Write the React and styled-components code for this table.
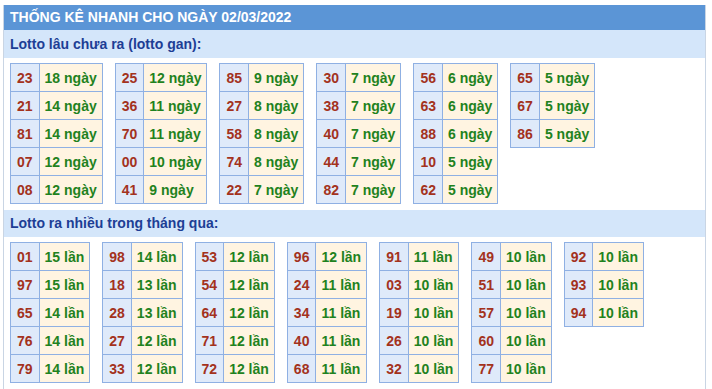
import React from "react";
import styled, { createGlobalStyle } from "styled-components";

const GlobalStyle = createGlobalStyle`
  body {
    margin: 0;
    background: #fff;
    font-family: "Liberation Sans", Arial, sans-serif;
  }
`;

const Box = styled.div`
  margin: 5px 6px 0 3px;
  border-left: 1px solid #c9d5e4;
  border-right: 1px solid #c9d5e4;
  padding-bottom: 3px;
`;

const Header = styled.div`
  height: 25px;
  line-height: 25px;
  padding-left: 6px;
  background: #5b95d6;
  color: #fff;
  font-size: 14px;
  font-weight: bold;
`;

const SubHeader = styled.div`
  height: ${(props) => props.h}px;
  line-height: ${(props) => props.h}px;
  padding-left: 6px;
  background: #d4e6fa;
  color: #1d3e95;
  font-size: 14px;
  font-weight: bold;
`;

const Tables = styled.div`
  display: flex;
  flex-wrap: wrap;
  align-items: flex-start;
  column-gap: 12px;
  padding: 5px 6px 6px 6px;
`;

const Table = styled.table`
  border-collapse: collapse;
  font-size: 14px;
  font-weight: bold;
`;

const Num = styled.td`
  height: 27px;
  padding: 0 6px;
  border: 1px solid #8fb0e3;
  background: #dfeafa;
  color: #a3321d;
  text-align: center;
`;

const Val = styled.td`
  height: 27px;
  padding: 0 5px;
  border: 1px solid #8fb0e3;
  background: #fff4e1;
  color: #1f8220;
  white-space: nowrap;
`;

const gan = [
  [["23", 18], ["21", 14], ["81", 14], ["07", 12], ["08", 12]],
  [["25", 12], ["36", 11], ["70", 11], ["00", 10], ["41", 9]],
  [["85", 9], ["27", 8], ["58", 8], ["74", 8], ["22", 7]],
  [["30", 7], ["38", 7], ["40", 7], ["44", 7], ["82", 7]],
  [["56", 6], ["63", 6], ["88", 6], ["10", 5], ["62", 5]],
  [["65", 5], ["67", 5], ["86", 5]],
];

const nhieu = [
  [["01", 15], ["97", 15], ["65", 14], ["76", 14], ["79", 14]],
  [["98", 14], ["18", 13], ["28", 13], ["27", 12], ["33", 12]],
  [["53", 12], ["54", 12], ["64", 12], ["71", 12], ["72", 12]],
  [["96", 12], ["24", 11], ["34", 11], ["40", 11], ["68", 11]],
  [["91", 11], ["03", 10], ["19", 10], ["26", 10], ["32", 10]],
  [["49", 10], ["51", 10], ["57", 10], ["60", 10], ["77", 10]],
  [["92", 10], ["93", 10], ["94", 10]],
];

function Group({ cols, unit }) {
  return (
    <Tables>
      {cols.map((rows, i) => (
        <Table key={i}>
          <tbody>
            {rows.map(([num, count]) => (
              <tr key={num}>
                <Num>{num}</Num>
                <Val>
                  {count} {unit}
                </Val>
              </tr>
            ))}
          </tbody>
        </Table>
      ))}
    </Tables>
  );
}

export default function App() {
  return (
    <>
      <GlobalStyle />
      <Box>
        <Header>THỐNG KÊ NHANH CHO NGÀY 02/03/2022</Header>
        <SubHeader h={28}>Lotto lâu chưa ra (lotto gan):</SubHeader>
        <Group cols={gan} unit="ngày" />
        <SubHeader h={27}>Lotto ra nhiều trong tháng qua:</SubHeader>
        <Group cols={nhieu} unit="lần" />
      </Box>
    </>
  );
}
